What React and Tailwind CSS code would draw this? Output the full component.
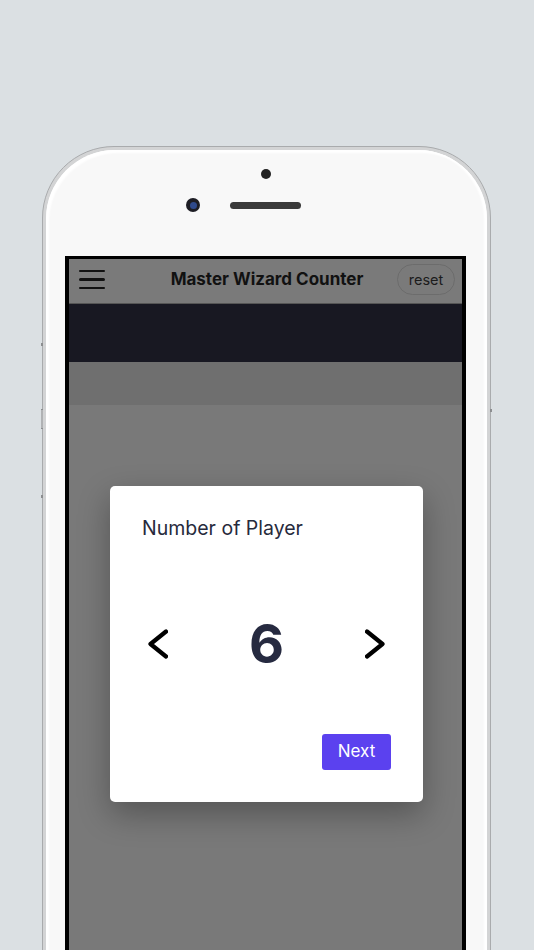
import React, { useState } from 'react';

const font = { fontFamily: 'Inter, "Noto Sans", sans-serif' };

const Chevron = ({ dir }) => (
  <svg width="20" height="30" viewBox="0 0 20 30" fill="none">
    <path
      d={dir === 'left' ? 'M18 2.5 L2.5 15 L18 27.5' : 'M2 2.5 L17.5 15 L2 27.5'}
      stroke="#000"
      strokeWidth="4.2"
      strokeLinecap="round"
      strokeLinejoin="round"
    />
  </svg>
);

const Hamburger = () => (
  <div className="flex flex-col gap-[6px] w-[26px]">
    <span className="block h-[2.5px] bg-[#111] rounded-full" />
    <span className="block h-[2.5px] bg-[#111] rounded-full" />
    <span className="block h-[2.5px] bg-[#111] rounded-full" />
  </div>
);

const ModalJugadores = ({ cantidad, setCantidad }) => (
  <div className="absolute left-[41px] top-[227px] w-[313px] h-[316px] bg-white rounded-[5px] shadow-[0_12px_32px_rgba(0,0,0,0.3)] flex flex-col">
    {/* Titulo */}
    <div className="pl-[32px] pt-[30px] text-[19.5px] leading-[24px] text-[#272a3c]">
      Number of Player
    </div>

    {/* Selector */}
    <div className="mt-[74px] px-[38px] flex items-center justify-between h-[60px]">
      <button type="button" onClick={() => setCantidad(Math.max(1, cantidad - 1))}>
        <Chevron dir="left" />
      </button>
      <span className="text-[54px] leading-[60px] font-bold text-[#262a40]">{cantidad}</span>
      <button type="button" onClick={() => setCantidad(cantidad + 1)}>
        <Chevron dir="right" />
      </button>
    </div>

    {/* Botones */}
    <div className="mt-auto pr-[32px] pb-[32px] flex justify-end">
      <button
        type="button"
        className="w-[69px] h-[36px] rounded-[3px] bg-[#5b41ef] text-white text-[17px]"
      >
        Next
      </button>
    </div>
  </div>
);

const App = () => {
  const [cantidad, setCantidad] = useState(6);

  return (
    <div className="w-[534px] h-[950px] overflow-hidden bg-[#dbe0e3] pt-[146px] pl-[42px]" style={font}>
      {/* Telefono */}
      <div className="relative w-[449px] h-[830px] rounded-t-[72px] border border-[#a9abad] bg-[#d3d4d5] p-[3px]">
        {/* botones laterales */}
        <span className="absolute left-[-2px] top-[196px] w-[2px] h-[3px] bg-[#8c8e90]" />
        <span className="absolute left-[-2px] top-[262px] w-[2px] h-[20px] bg-[#b0b2b4] border-y border-[#8c8e90]" />
        <span className="absolute left-[-2px] top-[348px] w-[2px] h-[3px] bg-[#8c8e90]" />
        <span className="absolute right-[-2px] top-[262px] w-[2px] h-[3px] bg-[#8c8e90]" />

        <div className="h-full rounded-t-[69px] bg-[#f8f8f8] shadow-[inset_3px_3px_2px_#ffffff,inset_-3px_0_2px_#ffffff] pl-[19px] pr-[21px] flex flex-col">
          {/* camara y parlante */}
          <div className="h-[106px] flex flex-col items-center">
            <span className="mt-[19px] w-[10px] h-[10px] rounded-full bg-[#222222]" />
            <div className="mt-[19px] w-full grid grid-cols-[1fr_auto_1fr] items-center">
              <div className="flex justify-end pr-[30px]">
                <span className="w-[14px] h-[14px] rounded-full bg-[#1d1d24] flex items-center justify-center">
                  <span className="w-[7px] h-[7px] rounded-full bg-[#2f4a8c]" />
                </span>
              </div>
              <span className="w-[71px] h-[7px] rounded-full bg-[#3a3a3a]" />
              <div />
            </div>
          </div>

          {/* Pantalla */}
          <div className="relative flex-1 border-x-4 border-t-[3px] border-black bg-[#797979] overflow-hidden">
            <div className="h-[44px] bg-[#7a7a7a] grid grid-cols-[1fr_auto_1fr] items-center pl-[10px] pr-[7px] pb-[3px]">
              <Hamburger />
              <div className="text-[17px] font-bold text-[#111]">Master Wizard Counter</div>
              <div className="flex justify-end">
                <button
                  type="button"
                  className="w-[58px] h-[31px] rounded-full border border-[#6c6c6c] text-[14.5px] text-[#1c1c1c]"
                >
                  reset
                </button>
              </div>
            </div>
            <div className="h-[59px] bg-[#181822] border-t border-[#555555]" />
            <div className="h-[43px] bg-[#6f6f6f]" />

            <ModalJugadores cantidad={cantidad} setCantidad={setCantidad} />
          </div>
        </div>
      </div>
    </div>
  );
};

export default App;
